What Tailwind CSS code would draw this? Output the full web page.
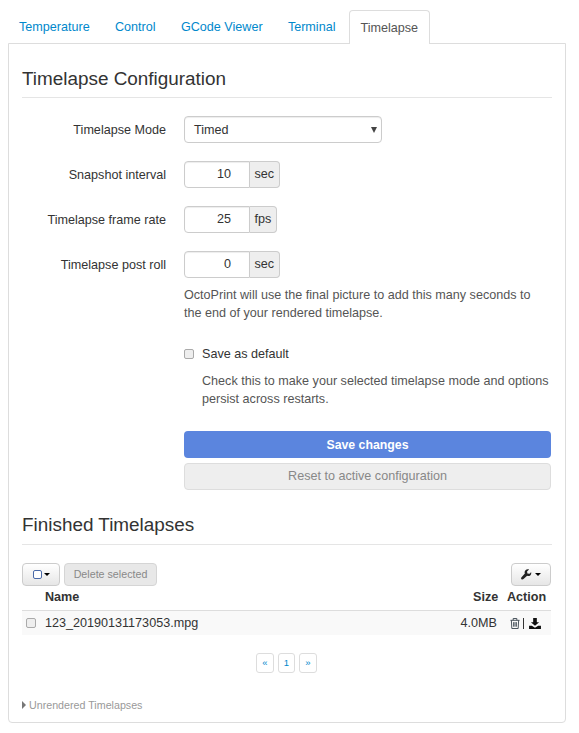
<!DOCTYPE html>
<html lang="en">
<head>
    <meta charset="UTF-8">
    <title>OctoPrint - Timelapse</title>
    <script src="https://cdn.jsdelivr.net/npm/@tailwindcss/browser@4"></script>
</head>
<body class="bg-white font-['Liberation_Sans',Arial,sans-serif] text-[12.6px] leading-[20px] text-[#333]">
    <div class="w-[579px] h-[733px] overflow-hidden pl-[8px] pr-[13px] pt-[10px]">
        <!-- Tabs -->
        <ul class="flex h-[34px] pl-[11px] gap-[25.3px] relative z-10 text-[#08c]">
            <li class="pt-[7px]">Temperature</li>
            <li class="pt-[7px]">Control</li>
            <li class="pt-[7px]">GCode Viewer</li>
            <li class="pt-[7px]">Terminal</li>
            <li class="-ml-[12px] w-[81px] h-[34px] pt-[7px] text-center text-[#555] bg-white border border-b-0 border-[#ddd] rounded-t-[4px]">Timelapse</li>
        </ul>

        <div class="w-[558px] h-[680px] border border-[#ddd] rounded-b-[4px] px-[13px] pt-[20px] -mt-px">
            <h3 class="text-[18.9px] leading-[30px] text-[#333] border-b border-[#e5e5e5] h-[34px]">Timelapse Configuration</h3>

            <!-- Config form -->
            <div class="mt-[18px] flex flex-col gap-[18px]">
                <div class="flex items-center h-[27px]">
                    <label class="w-[144px] text-right">Timelapse Mode</label>
                    <div class="relative ml-[18px] w-[198px] h-[27px] border border-[#ccc] rounded-[4px] pl-[9px] flex items-center shadow-[inset_0_1px_1px_rgba(0,0,0,0.075)]">
                        Timed
                        <span class="absolute right-[4px] top-[10px] w-0 h-0 border-x-[3px] border-x-transparent border-t-[6px] border-t-[#444]"></span>
                    </div>
                </div>
                <div class="flex items-center h-[27px]">
                    <label class="w-[144px] text-right">Snapshot interval</label>
                    <div class="ml-[18px] flex">
                        <div class="w-[66px] h-[27px] border border-[#ccc] rounded-l-[4px] pr-[18px] text-right leading-[25px] shadow-[inset_0_1px_1px_rgba(0,0,0,0.075)]">10</div>
                        <div class="h-[27px] px-[4.5px] bg-[#eee] border border-l-0 border-[#ccc] rounded-r-[4px] leading-[25px]">sec</div>
                    </div>
                </div>
                <div class="flex items-center h-[27px]">
                    <label class="w-[144px] text-right">Timelapse frame rate</label>
                    <div class="ml-[18px] flex">
                        <div class="w-[66px] h-[27px] border border-[#ccc] rounded-l-[4px] pr-[18px] text-right leading-[25px] shadow-[inset_0_1px_1px_rgba(0,0,0,0.075)]">25</div>
                        <div class="h-[27px] px-[4.5px] bg-[#eee] border border-l-0 border-[#ccc] rounded-r-[4px] leading-[25px]">fps</div>
                    </div>
                </div>
                <div class="flex items-center h-[27px]">
                    <label class="w-[144px] text-right">Timelapse post roll</label>
                    <div class="ml-[18px] flex">
                        <div class="w-[66px] h-[27px] border border-[#ccc] rounded-l-[4px] pr-[18px] text-right leading-[25px] shadow-[inset_0_1px_1px_rgba(0,0,0,0.075)]">0</div>
                        <div class="h-[27px] px-[4.5px] bg-[#eee] border border-l-0 border-[#ccc] rounded-r-[4px] leading-[25px]">sec</div>
                    </div>
                </div>
            </div>

            <div class="ml-[162px] w-[368px]">
                <p class="mt-[8px] w-[355px] text-[#555] leading-[18px]">OctoPrint will use the final picture to add this many seconds to the end of your rendered timelapse.</p>
                <label class="mt-[22px] flex items-center h-[20px]">
                    <span class="w-[10px] h-[10px] border border-[#aaa] rounded-[2px] bg-[#eee]"></span>
                    <span class="ml-[8px]">Save as default</span>
                </label>
                <p class="mt-[8px] ml-[18px] text-[#555] leading-[18px]">Check this to make your selected timelapse mode and options persist across restarts.</p>
                <button class="mt-[23px] block w-[367px] h-[27px] bg-[#5b85de] text-white font-bold text-[12.3px] rounded-[4px] text-center">Save changes</button>
                <button class="mt-[5px] block w-[367px] h-[27px] pb-[1px] bg-[#eee] border border-[#ddd] text-[#888] rounded-[4px] text-center">Reset to active configuration</button>
            </div>

            <h3 class="mt-[20px] text-[18.9px] leading-[30px] text-[#333] border-b border-[#e5e5e5] h-[35px]">Finished Timelapses</h3>

            <!-- Toolbar -->
            <div class="mt-[18px] flex justify-between items-center h-[23px] w-[529px]">
                <div class="flex gap-[4px]">
                    <button class="w-[38px] h-[23px] border border-[#ccc] rounded-[4px] bg-gradient-to-b from-white to-[#e6e6e6] flex items-center justify-center gap-[2px]">
                        <span class="w-[9px] h-[9px] border border-[#4a6aa8] rounded-[2px] bg-white"></span>
                        <span class="w-0 h-0 border-x-[3px] border-x-transparent border-t-[3px] border-t-black"></span>
                    </button>
                    <button class="w-[93px] h-[23px] pb-[1px] border border-[#d5d5d5] rounded-[4px] bg-[#e8e8e8] text-[#888] text-[10.7px]">Delete selected</button>
                </div>
                <button class="w-[40px] h-[23px] border border-[#ccc] rounded-[4px] bg-gradient-to-b from-white to-[#e6e6e6] flex items-center justify-center gap-[3px]">
                    <svg width="11" height="11" viewBox="0 0 12 12" fill="#222"><path d="M11.5 3.2 9.3 5.3 7 4.9 6.6 2.7 8.8.5C7.4 0 5.8.3 4.9 1.3 3.9 2.3 3.7 3.7 4.2 4.9L.6 8.9c-.7.7-.7 1.6-.1 2.2.6.6 1.5.6 2.2-.1l4-3.6c1.2.5 2.6.3 3.6-.7 1-1 1.3-2.5.2-3.5z"/></svg>
                    <span class="w-0 h-0 border-x-[3px] border-x-transparent border-t-[3px] border-t-black"></span>
                </button>
            </div>

            <!-- File table -->
            <div class="w-[529px] mt-[1px]">
                <div class="flex h-[24px] items-center pb-[3px] font-bold border-b border-[#ddd]">
                    <span class="ml-[23px]">Name</span>
                    <span class="ml-auto w-[34px]">Size</span>
                    <span class="w-[44px]">Action</span>
                </div>
                <div class="flex h-[24px] items-center bg-[#f9f9f9] text-[#333]">
                    <span class="ml-[4px] w-[10px] h-[10px] border border-[#aaa] rounded-[2px] bg-[#eee]"></span>
                    <span class="ml-[9px]">123_20190131173053.mpg</span>
                    <span class="ml-auto">4.0MB</span>
                    <span class="flex items-center w-[54px] pl-[13px] gap-[3px]">
                        <svg width="10" height="11" viewBox="0 0 11 12" fill="none" stroke="#3b4650"><path d="M.5 2.5h10M3.5 2.5v-2h4v2M1.5 2.5l.5 9h7l.5-9M4 4.5v5M5.5 4.5v5M7 4.5v5"/></svg>
                        <span class="w-px h-[11px] bg-[#333]"></span>
                        <svg class="ml-[2px]" width="12" height="11" viewBox="0 0 13 12" fill="#111"><path d="M4.5 0h4v4.5H11L6.5 8.5 2 4.5h2.5zM0 8.5h3l3.5 2 3.5-2h3V12H0z"/></svg>
                    </span>
                </div>
            </div>

            <!-- Pagination -->
            <div class="mt-[18px] flex justify-center gap-[4px] text-[#08c] text-[9.5px] w-[529px]">
                <span class="w-[18px] h-[20px] border border-[#ddd] rounded-[3px] flex items-center justify-center">«</span>
                <span class="w-[17px] h-[20px] border border-[#ddd] rounded-[3px] flex items-center justify-center">1</span>
                <span class="w-[18px] h-[20px] border border-[#ddd] rounded-[3px] flex items-center justify-center">»</span>
            </div>

            <div class="mt-[22px] flex items-center text-[#999] text-[10.7px]">
                <span class="w-0 h-0 border-y-[4px] border-y-transparent border-l-[4px] border-l-[#777]"></span>
                <span class="ml-[3px]">Unrendered Timelapses</span>
            </div>
        </div>
    </div>
</body>
</html>
